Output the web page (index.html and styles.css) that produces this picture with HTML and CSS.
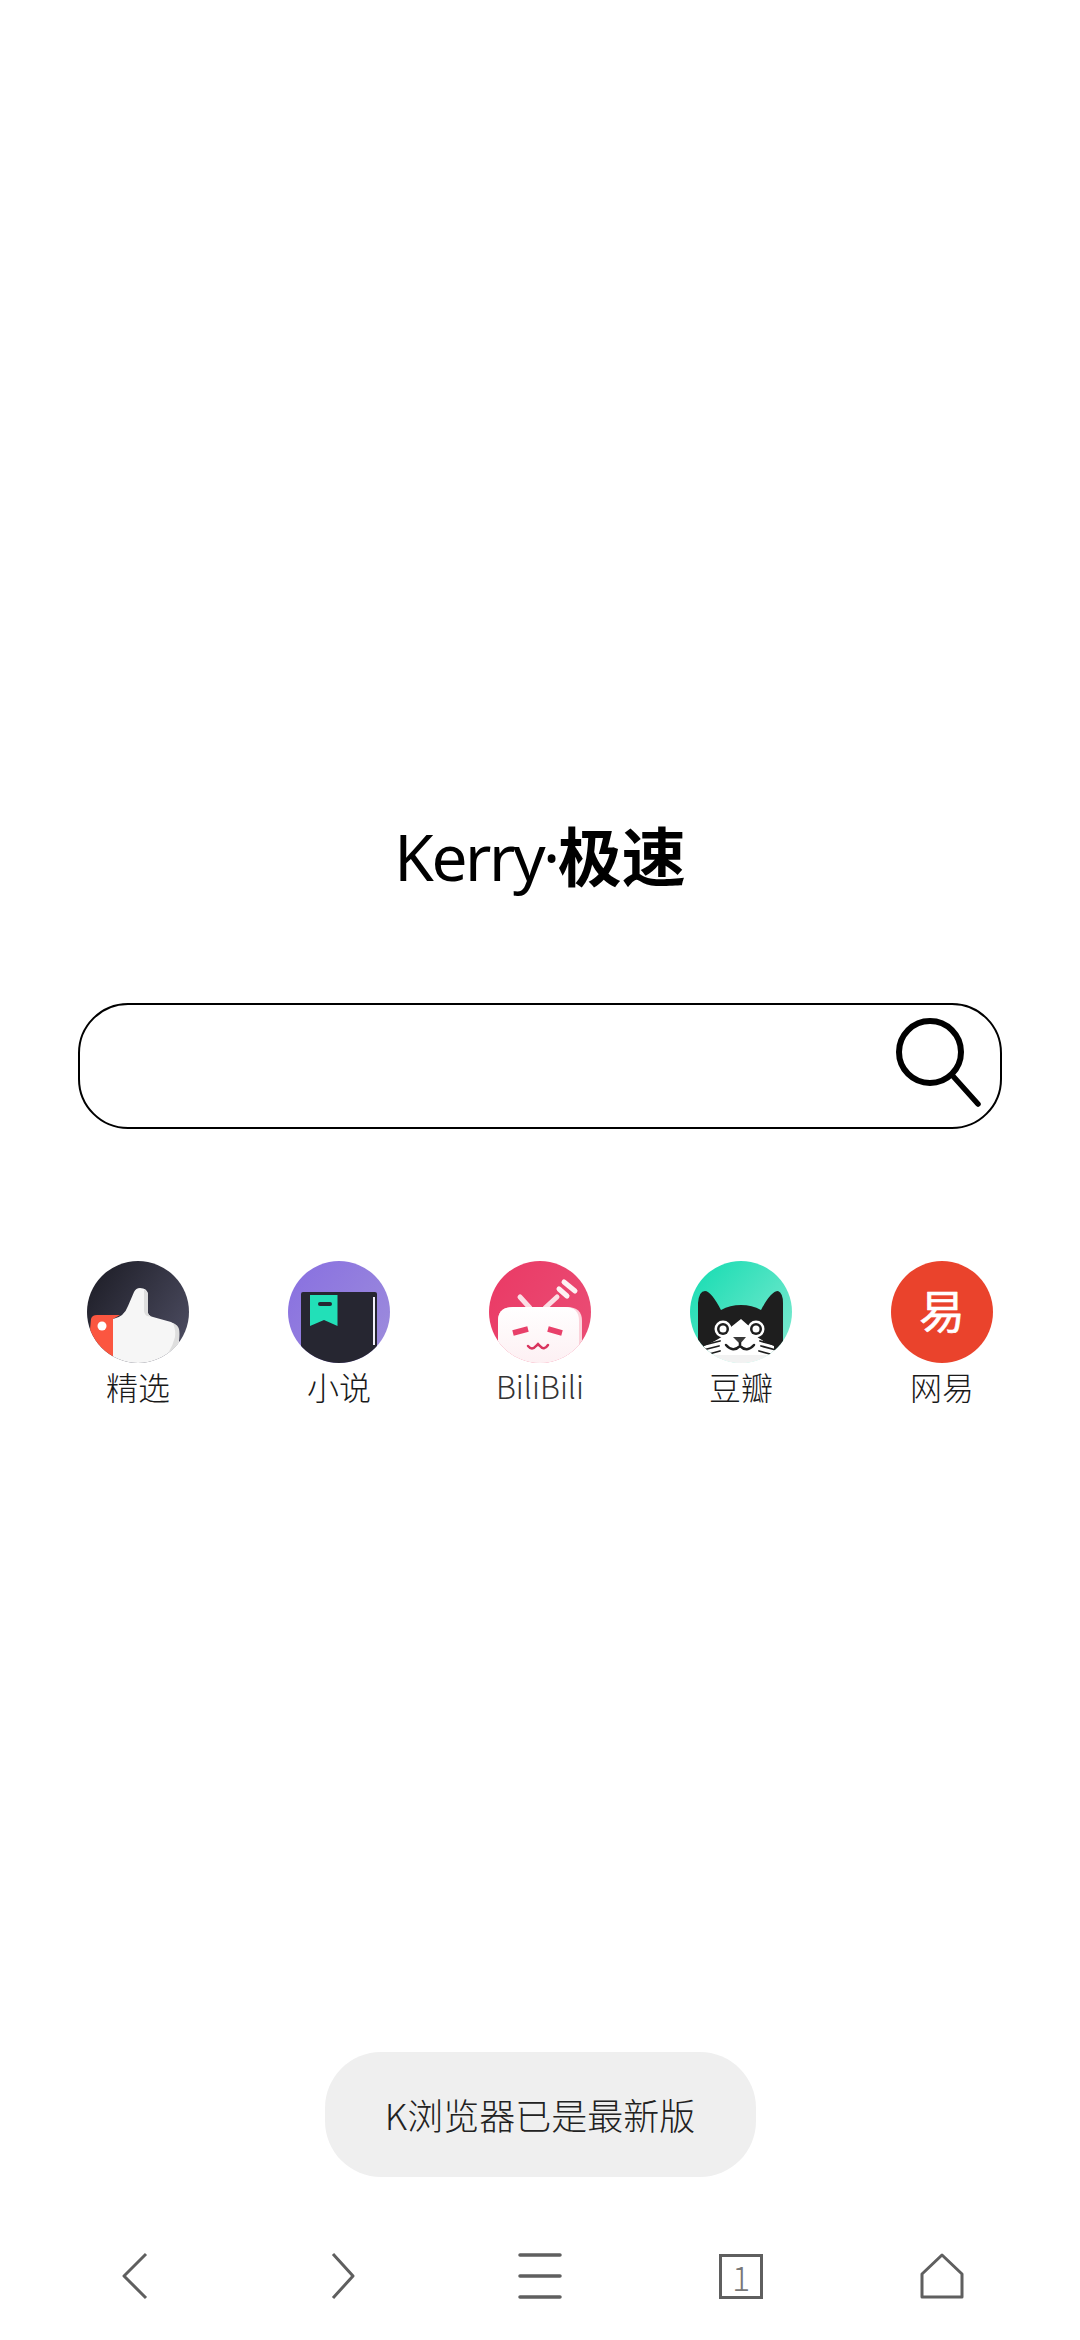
FILE: index.html
```html
<!DOCTYPE html>
<html>

<head>
    <meta charset="utf-8">
    <link rel="stylesheet" href="styles.css">
</head>

<body>
    <div class="page">
        <h1 class="title">Kerry·<b>极速</b></h1>

        <!-- Search box -->
        <div class="search">
            <svg class="search-icon" width="90" height="96" viewBox="0 0 90 96">
                <circle cx="38" cy="34" r="31" fill="none" stroke="#000" stroke-width="6" />
                <path d="M60 57 L86 86" fill="none" stroke="#000" stroke-width="5.5" stroke-linecap="round" />
            </svg>
        </div>

        <!-- Shortcuts -->
        <div class="shortcuts">
            <div class="shortcut">
                <svg class="logo" viewBox="0 0 102 102">
                    <defs>
                        <linearGradient id="darkBg" x1="0.1" y1="0.1" x2="1" y2="0.7">
                            <stop offset="0" stop-color="#20202a" />
                            <stop offset="1" stop-color="#4a4a5e" />
                        </linearGradient>
                        <clipPath id="disc">
                            <circle cx="51" cy="51" r="51" />
                        </clipPath>
                    </defs>
                    <g clip-path="url(#disc)">
                        <rect width="102" height="102" fill="url(#darkBg)" />
                        <path d="M4 58 Q5 54 10 54 L33 54 L26 58 L26 102 L0 102 Z" fill="#fb5640" />
                        <circle cx="15" cy="65" r="4.5" fill="#fff" />
                        <path d="M26 58 Q37 56 41 45 L47 31 Q49 27 53 27 Q60 27 61 33 L61 52 Q62 55 66 56 L84 61 Q92 64 92 74 L92 102 L26 102 Z" fill="#f6f6f6" />
                        <path d="M92 68 Q93 72 92 80 L84 102 L72 102 Q84 92 88 76 Q89 70 86 62 Q91 64 92 68 Z" fill="#dedede" />
                        <path d="M61 33 L61 52 Q62 55 66 56 L60 55 Q57 53 57 49 L57 29 Q60 29 61 33 Z" fill="#dedede" />
                    </g>
                </svg>
                <span class="label">精选</span>
            </div>

            <div class="shortcut">
                <svg class="logo" viewBox="0 0 102 102">
                    <defs>
                        <linearGradient id="purpleBg" x1="0.1" y1="0.1" x2="1" y2="0.8">
                            <stop offset="0" stop-color="#8a72e0" />
                            <stop offset="1" stop-color="#9c8bdc" />
                        </linearGradient>
                    </defs>
                    <g clip-path="url(#disc)">
                        <rect width="102" height="102" fill="url(#purpleBg)" />
                        <path d="M13 33 Q13 31 15 31 L87 31 Q89 31 89 33 L89 102 L13 102 Z" fill="#262631" />
                        <rect x="85" y="36" width="2" height="48" fill="#f2f0fa" />
                        <path d="M22 34 L49.5 34 L49.5 65 L36 59 L22 65 Z" fill="#22e0b8" />
                        <rect x="30" y="41" width="14" height="4" rx="2" fill="#262631" />
                    </g>
                </svg>
                <span class="label">小说</span>
            </div>

            <div class="shortcut">
                <svg class="logo" viewBox="0 0 102 102">
                    <defs>
                        <linearGradient id="pinkBg" x1="0" y1="0.2" x2="1" y2="0.8">
                            <stop offset="0" stop-color="#ea3b66" />
                            <stop offset="1" stop-color="#ea4d75" />
                        </linearGradient>
                        <linearGradient id="headFill" x1="0" y1="0" x2="0" y2="1">
                            <stop offset="0" stop-color="#fff" />
                            <stop offset="1" stop-color="#fdf0f3" />
                        </linearGradient>
                    </defs>
                    <g clip-path="url(#disc)">
                        <rect width="102" height="102" fill="url(#pinkBg)" />
                        <path d="M31 36 L41 47 M68 36 L56 47" fill="none" stroke="#fbdfe5" stroke-width="5" stroke-linecap="round" />
                        <path d="M70 28 L78 35 M75 21 L86 30" fill="none" stroke="#fdf1f3" stroke-width="5" stroke-linecap="round" />
                        <path d="M9 102 L9 60 Q9 46 24 46 L78 46 Q93 46 93 60 L93 102 Z" fill="#fbd3db" />
                        <path d="M9 102 L9 60 Q9 46 24 46 L76 46 Q90 46 90 60 L90 102 Z" fill="url(#headFill)" />
                        <path d="M24 72 L39 68 M59 68 L73 72" fill="none" stroke="#e8406a" stroke-width="5.5" />
                        <path d="M39 85 Q43 90 47 85 L49 83 L51 85 Q55 90 59 84" fill="none" stroke="#d8345e" stroke-width="2.5" stroke-linecap="round" />
                    </g>
                </svg>
                <span class="label label-thin">BiliBili</span>
            </div>

            <div class="shortcut">
                <svg class="logo" viewBox="0 0 102 102">
                    <defs>
                        <linearGradient id="tealBg" x1="0.2" y1="0.1" x2="1" y2="0.8">
                            <stop offset="0" stop-color="#24deb6" />
                            <stop offset="1" stop-color="#7be9cf" />
                        </linearGradient>
                    </defs>
                    <g clip-path="url(#disc)">
                        <rect width="102" height="102" fill="url(#tealBg)" />
                        <path d="M8 84 L8 42 Q9 30 15 30 Q21 30 31 49 Q40 44 51 44 Q62 44 71 49 Q81 30 88 30 Q93 32 93 42 L93 84 L80 92 L22 92 Z" fill="#1e1e1e" />
                        <path d="M51 58 L60 66 Q62 76 84 85 L84 102 L14 102 L14 85 Q36 76 41 66 Z" fill="#fff" />
                        <rect x="0" y="94" width="102" height="8" fill="#f2f2f2" />
                        <circle cx="33" cy="68" r="8.5" fill="#fff" />
                        <circle cx="33" cy="68" r="6" fill="#1e1e1e" />
                        <circle cx="33" cy="68" r="3.5" fill="#fff" />
                        <circle cx="66" cy="68" r="8.5" fill="#fff" />
                        <circle cx="66" cy="68" r="6" fill="#1e1e1e" />
                        <circle cx="66" cy="68" r="3.5" fill="#fff" />
                        <path d="M43 76 L56 76 L50 83 Z" fill="#3a3a3a" />
                        <path d="M50 82 V85 M36 84 Q43 92 50 85 Q57 92 64 84" fill="none" stroke="#1e1e1e" stroke-width="2.5" stroke-linecap="round" />
                        <path d="M14 84 L30 80 M13 89 L29 85 M19 93 L30 90 M85 84 L70 80 M86 89 L71 85 M80 93 L69 90" fill="none" stroke="#1e1e1e" stroke-width="1.8" stroke-linecap="round" />
                    </g>
                </svg>
                <span class="label">豆瓣</span>
            </div>

            <div class="shortcut">
                <svg class="logo" viewBox="0 0 102 102">
                    <circle cx="51" cy="51" r="51" fill="#ea432c" />
                    <text class="logo-char" x="51" y="67">易</text>
                </svg>
                <span class="label">网易</span>
            </div>
        </div>

        <!-- Toast message -->
        <div class="toast">K浏览器已是最新版</div>

        <!-- Bottom toolbar -->
        <div class="toolbar">
            <svg class="tool" viewBox="0 0 60 60">
                <path d="M38 8 L16 30 L38 52" class="tool-line" />
            </svg>
            <svg class="tool" viewBox="0 0 60 60">
                <path d="M24 8 L44 30 L24 52" class="tool-line" />
            </svg>
            <svg class="tool" viewBox="0 0 60 60">
                <path d="M10 9 H50 M10 30 H50 M10 51 H50" class="tool-line tool-bars" />
            </svg>
            <div class="tool">
                <div class="tab-count">1</div>
            </div>
            <svg class="tool" viewBox="0 0 60 60">
                <path d="M30 9 L50 28 V51 H10 V28 Z" class="tool-line" />
            </svg>
        </div>
    </div>
</body>

</html>
```

FILE: styles.css
```css
body {
    font-family: "Noto Sans CJK SC", sans-serif;
    background-color: #fff;
    margin: 0;
}

.page {
    display: flex;
    flex-direction: column;
    align-items: center;
    height: 2340px;
    overflow: hidden;
}

.title {
    margin: 803px 0 0;
    height: 100px;
    line-height: 100px;
    font-family: "Noto Sans", "Noto Sans CJK SC", sans-serif;
    font-size: 64px;
    font-weight: 400;
    letter-spacing: -2.5px;
    color: #000;
}

.title b {
    font-family: "Noto Sans CJK SC", sans-serif;
    font-weight: 700;
    letter-spacing: 0;
}

.search {
    box-sizing: border-box;
    display: flex;
    justify-content: flex-end;
    align-items: center;
    width: 924px;
    height: 126px;
    margin-top: 100px;
    padding-right: 18px;
    border: 2px solid #000;
    border-radius: 50px;
}

.shortcuts,
.toolbar {
    display: grid;
    grid-template-columns: repeat(5, 201px);
    justify-content: center;
    justify-items: center;
}

.shortcuts {
    margin-top: 132px;
}

.shortcut {
    display: flex;
    flex-direction: column;
    align-items: center;
}

.logo {
    display: block;
    width: 102px;
    height: 102px;
}

.logo-char {
    font-size: 46px;
    font-weight: 400;
    text-anchor: middle;
    fill: #fff;
    stroke: #fff;
    stroke-width: 0.6;
    stroke-linejoin: round;
}

.label {
    line-height: 46px;
    font-size: 32px;
    font-weight: 300;
    color: #1a1a1a;
}

.label-thin {
    font-size: 31px;
    color: #333;
}

.toast {
    box-sizing: border-box;
    width: 431px;
    height: 125px;
    margin-top: 643px;
    line-height: 125px;
    text-align: center;
    font-size: 36px;
    font-weight: 300;
    color: #222;
    background-color: #efefef;
    border-radius: 56px;
}

.toolbar {
    margin-top: 69px;
}

.tool {
    display: flex;
    justify-content: center;
    align-items: center;
    width: 60px;
    height: 60px;
}

.tool-line {
    fill: none;
    stroke: #5f5f5f;
    stroke-width: 3;
    stroke-linejoin: round;
}

.tool-bars {
    stroke-width: 3.5;
    stroke-linecap: round;
}

.tab-count {
    box-sizing: border-box;
    width: 44px;
    height: 45px;
    line-height: 39px;
    text-align: center;
    font-size: 34px;
    font-weight: 300;
    color: #777;
    border: 3px solid #5f5f5f;
}
```
